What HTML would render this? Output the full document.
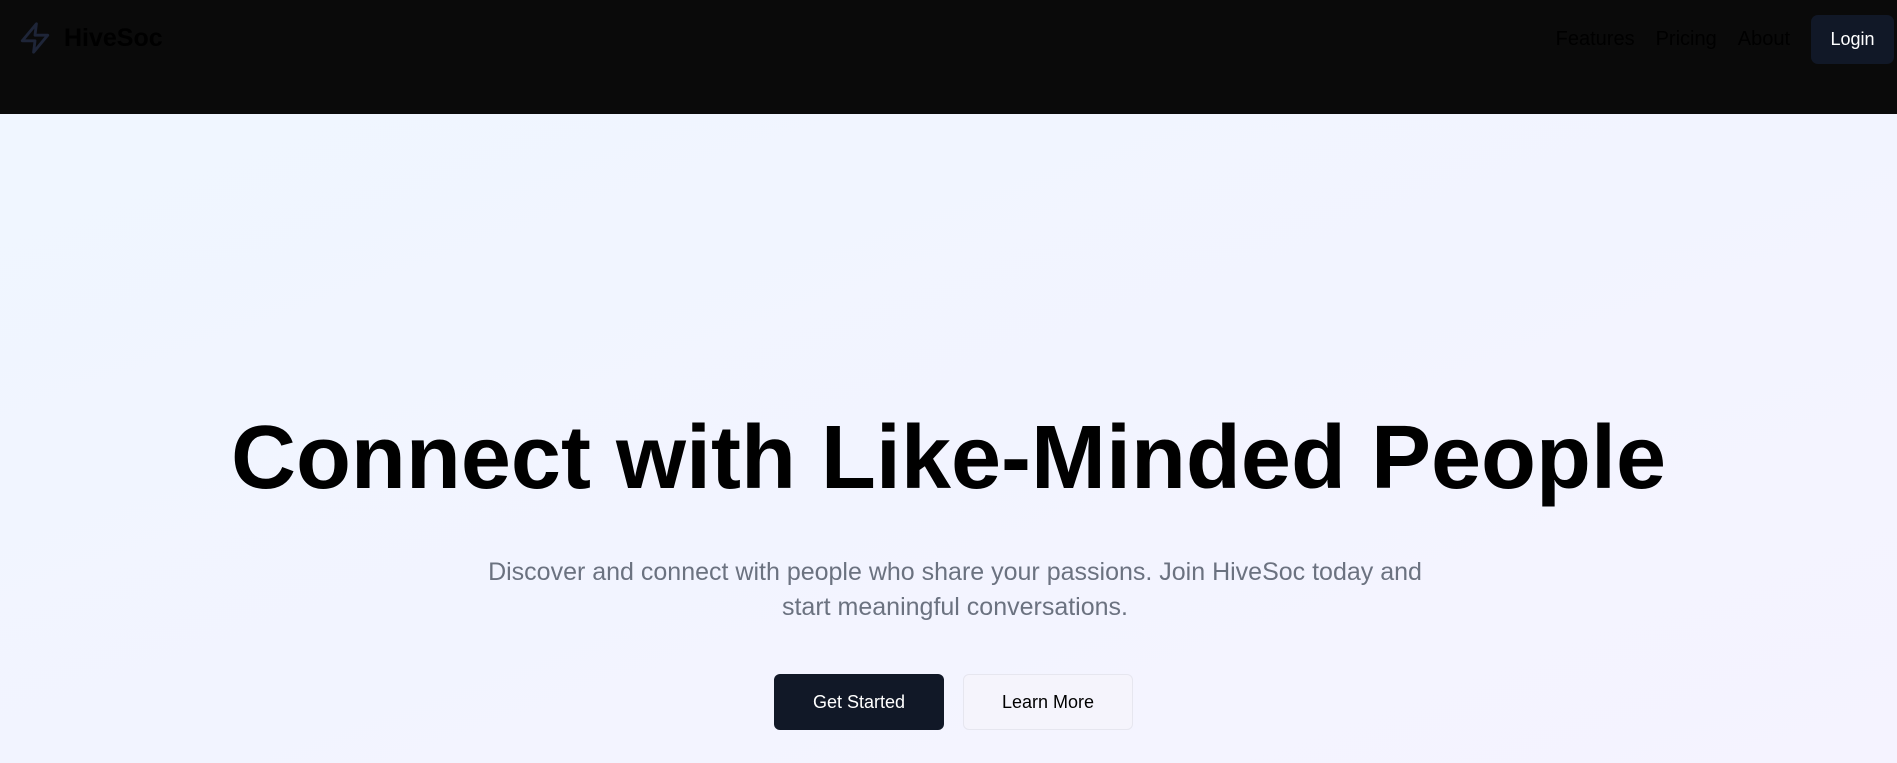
<!DOCTYPE html>
<html><head><style>
*{margin:0;padding:0;box-sizing:border-box}
body{width:1897px;height:763px;overflow:hidden;font-family:"Liberation Sans",sans-serif;background:linear-gradient(160deg,#eff6ff,#f5f3ff)}
header{height:114px;background:#0a0a0a;position:relative}
.logo{position:absolute;left:18px;top:20px;display:flex;align-items:center}
.logo span{font-weight:bold;font-size:25px;color:#000;margin-left:12px}
nav{position:absolute;right:0;top:15px;display:flex;align-items:center}
nav a{color:#000;font-size:20px;margin-right:21px;text-decoration:none}
.login{background:#111827;color:#fff;font-size:18px;width:83px;height:49px;border-radius:7px;display:flex;align-items:center;justify-content:center;margin-right:3px}
h1{position:absolute;left:0;width:1897px;top:405px;text-align:center;font-size:90px;font-weight:bold;color:#000;line-height:106px}
p{position:absolute;left:405px;width:1100px;top:555px;text-align:center;font-size:25px;line-height:35px;color:#6b7280}
.b{position:absolute;top:674px;height:56px;width:170px;border-radius:6px;display:flex;align-items:center;justify-content:center;font-size:18px}
</style></head><body>
<header>
<div class="logo"><svg width="34" height="36" viewBox="0 0 24 24" fill="none" stroke="#1e2538" stroke-width="2" stroke-linejoin="round"><path d="M13 2L3 14h9l-1 8 10-12h-9l1-8z"/></svg><span>HiveSoc</span></div>
<nav><a>Features</a><a>Pricing</a><a>About</a><div class="login">Login</div></nav>
</header>
<h1>Connect with Like-Minded People</h1>
<p>Discover and connect with people who share your passions. Join HiveSoc today and<br>start meaningful conversations.</p>
<div class="b" style="left:774px;background:#111827;color:#fff">Get Started</div>
<div class="b" style="left:963px;background:#f5f4fc;border:1px solid #e6e6ef;color:#000">Learn More</div>
</body></html>
